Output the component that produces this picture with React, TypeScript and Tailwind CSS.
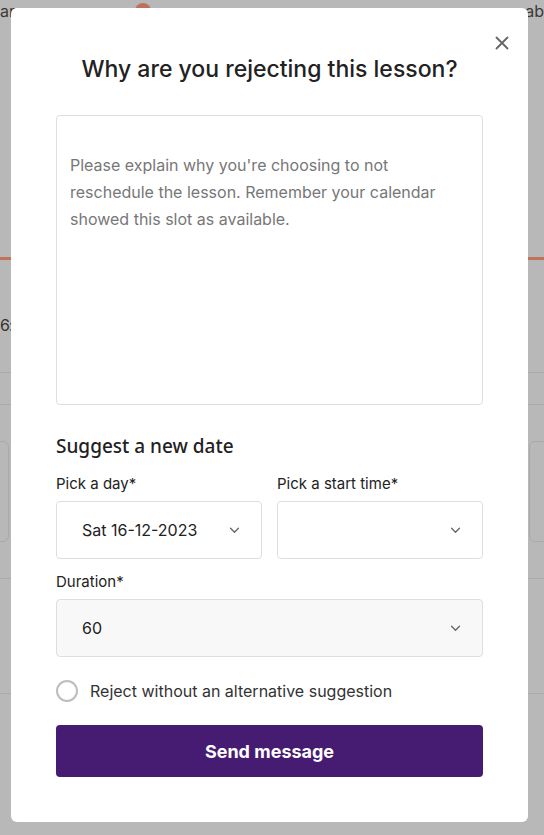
import React from "react";

function Chevron() {
  return (
    <svg viewBox="0 0 12 8" className="w-[11px] h-[7px]" fill="none" stroke="#666" strokeWidth="1.5" strokeLinecap="round" strokeLinejoin="round">
      <path d="M1.5 1.5 6 6l4.5-4.5" />
    </svg>
  );
}

function Select({ value, muted }: { value?: string; muted?: boolean }) {
  return (
    <div
      className={`h-[58px] flex items-center justify-between pl-[25px] pr-[21px] rounded-[4px] border border-[#dedede] ${
        muted ? "bg-[#f8f8f8]" : "bg-white"
      }`}
    >
      <span className="text-[16px] text-[#222]">{value}</span>
      <Chevron />
    </div>
  );
}

function Field({ label, children }: { label: string; children: React.ReactNode }) {
  return (
    <div className="flex flex-col gap-[7px]">
      <div className="text-[15px] leading-[20px] text-[#222]">{label}</div>
      {children}
    </div>
  );
}

export default function App() {
  return (
    <div
      className="relative w-full h-[835px] overflow-hidden bg-[#b8b8b8]"
      style={{ fontFamily: "Inter, 'Liberation Sans', sans-serif" }}
    >
      {/* page underneath the overlay */}
      <div className="flex flex-col text-[16px] text-[#3a3a3a]">
        <div className="flex items-center justify-between h-[22px]">
          <span>ar</span>
          <span className="ml-[120px] w-[16px] h-[16px] rounded-full bg-[#c0705a]" />
          <span className="flex-1" />
          <span>ab</span>
        </div>
        <div className="mt-[235px] h-[3px] bg-[#c2715a]" />
        <div className="mt-[55px] h-[20px] leading-[20px] text-[#333] tracking-[-1px]">6:</div>
        <div className="mt-[37px] h-px bg-[#ababab]" />
        <div className="mt-[31px] h-px bg-[#ababab]" />
        <div className="mt-[36px] flex justify-between">
          <div className="ml-[-20px] w-[29px] h-[101px] rounded-[6px] border border-[#a9a9a9]" />
          <div className="mr-[-20px] w-[35px] h-[101px] rounded-[6px] border border-[#a9a9a9]" />
        </div>
        <div className="mt-[36px] h-px bg-[#ababab]" />
        <div className="mt-[114px] h-px bg-[#ababab]" />
      </div>

      {/* modal */}
      <div className="absolute inset-0 flex items-start pt-[8px] pl-[11px]">
        <div className="relative w-[517px] h-[814px] bg-white rounded-[6px] px-[45px] pt-[43px]">
          <button className="absolute top-[28px] right-[19px] text-[#666]">
            <svg viewBox="0 0 14 14" className="w-[14px] h-[14px]" fill="none" stroke="currentColor" strokeWidth="1.8" strokeLinecap="round">
              <path d="M1.5 1.5l11 11M12.5 1.5l-11 11" />
            </svg>
          </button>

          <h1 className="text-center text-[23px] leading-[36px] font-medium text-[#222]">
            Why are you rejecting this lesson?
          </h1>

          <div className="mt-[28px] h-[290px] rounded-[4px] border border-[#dedede] pl-[13px] pr-[22px] pt-[36px] text-[16px] leading-[27px] text-[#777]">
            Please explain why you're choosing to not reschedule the lesson. Remember your calendar showed this slot as available.
          </div>

          <h2
            className="mt-[28px] text-[19px] leading-[26px] font-medium text-[#222]"
            style={{ fontFamily: "'Noto Sans', 'Open Sans', sans-serif" }}
          >
            Suggest a new date
          </h2>

          <div className="mt-[15px] flex flex-col gap-[13px]">
            <div className="grid grid-cols-2 gap-x-[15px]">
              <Field label="Pick a day*">
                <Select value="Sat 16-12-2023" />
              </Field>
              <Field label="Pick a start time*">
                <Select />
              </Field>
            </div>
            <Field label="Duration*">
              <Select value="60" muted />
            </Field>
          </div>

          <label className="mt-[22px] flex items-center gap-[12px]">
            <span className="w-[22px] h-[22px] rounded-full border-2 border-[#bdbdbd] bg-white" />
            <span className="text-[16px] text-[#333]">Reject without an alternative suggestion</span>
          </label>

          <button className="mt-[22px] w-full h-[52px] rounded-[4px] bg-[#461c72] text-white text-[18px] font-bold">
            Send message
          </button>
        </div>
      </div>
    </div>
  );
}
